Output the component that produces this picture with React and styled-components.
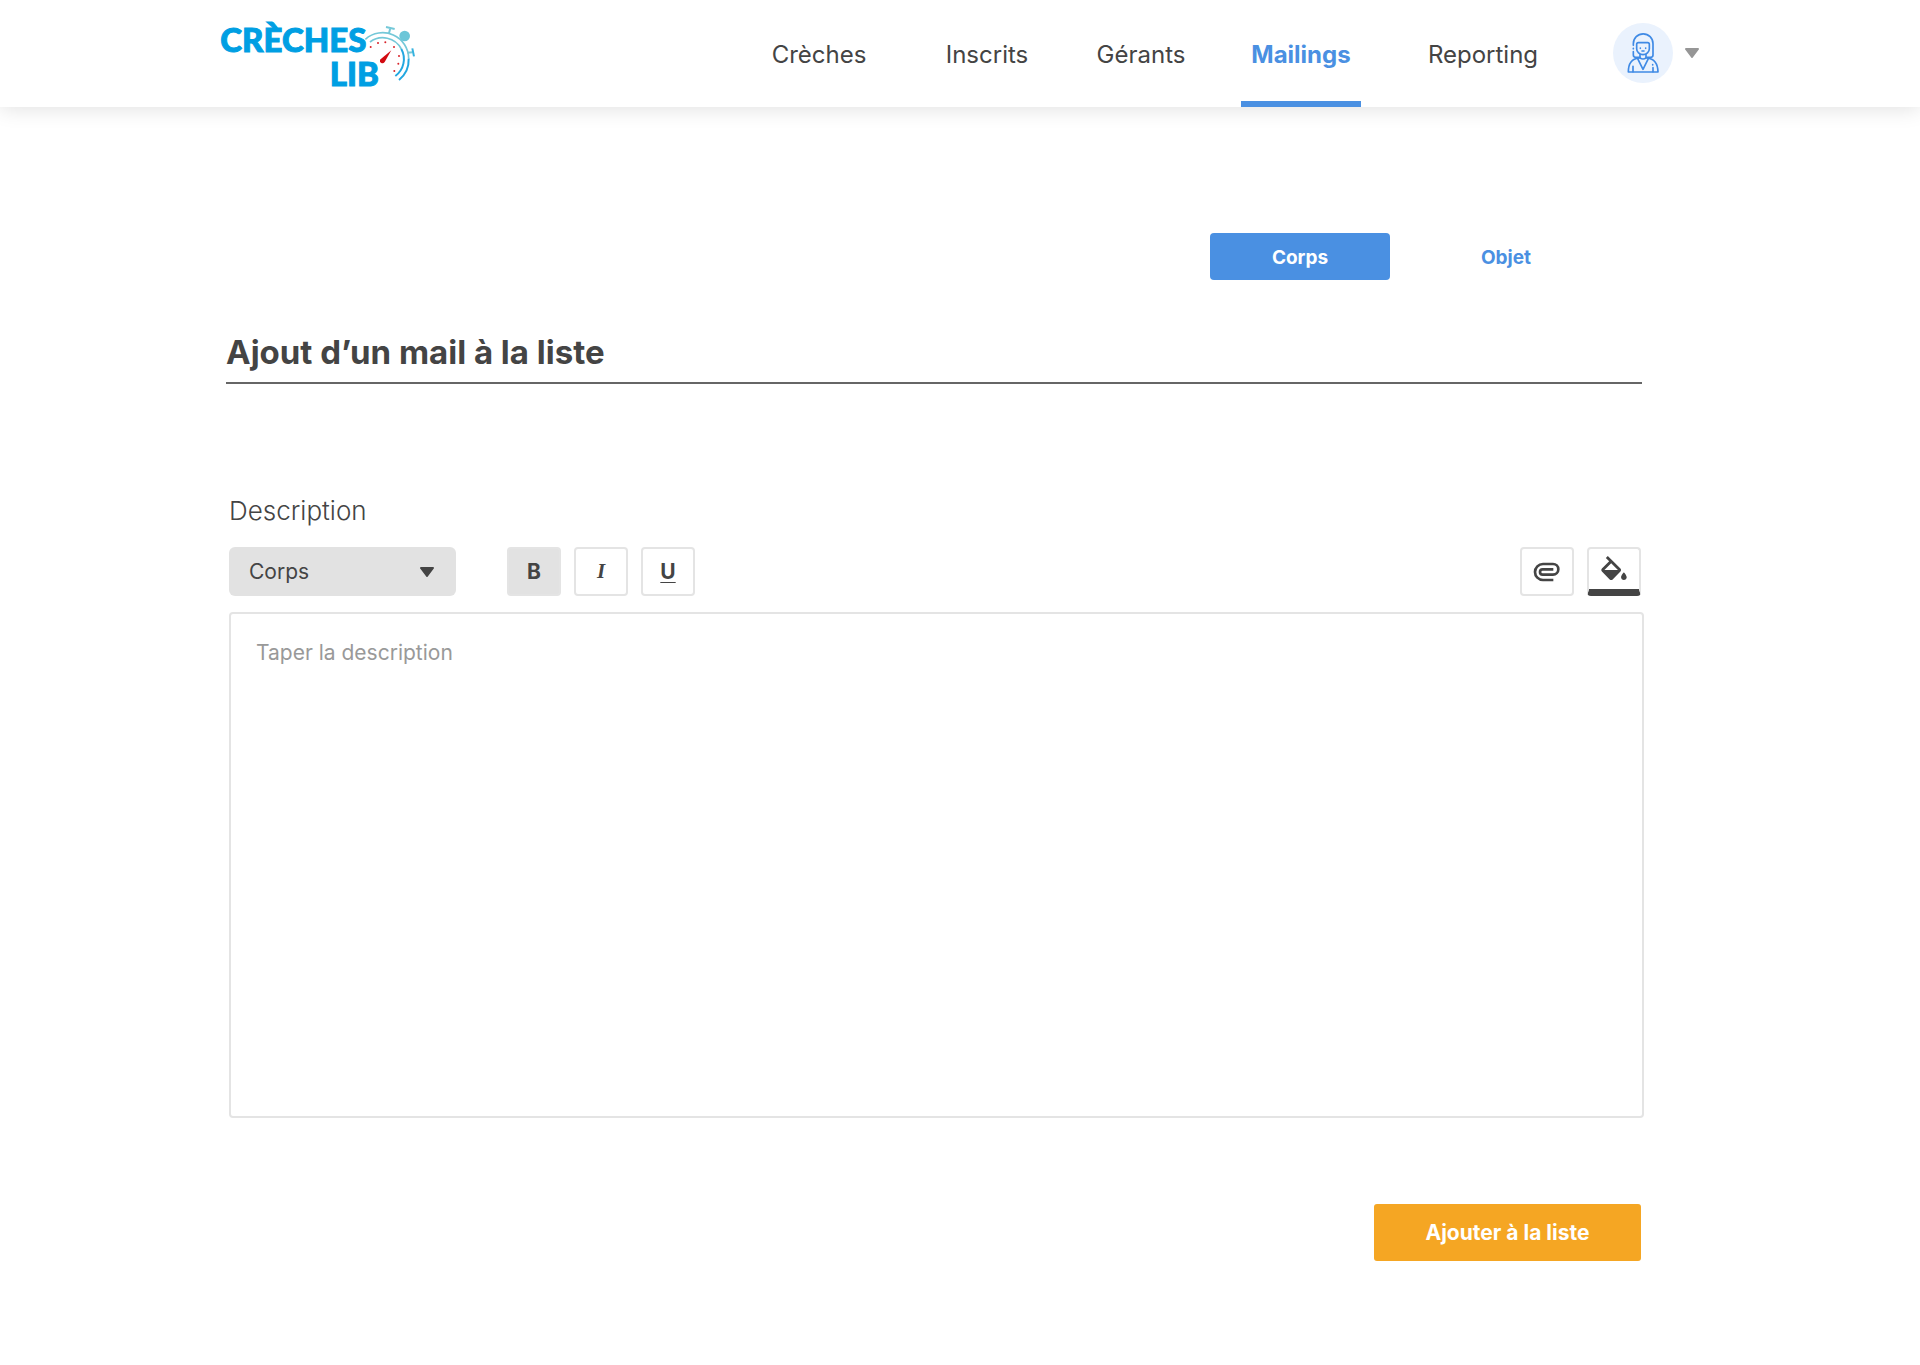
import React, { useState } from 'react';
import styled, { createGlobalStyle, css } from 'styled-components';

const links = [
  { name: 'Crèches', space: 0 },
  { name: 'Inscrits', space: 48 },
  { name: 'Gérants', space: 34 },
  { name: 'Mailings', space: 40 },
  { name: 'Reporting', space: 62 },
];

function Logo() {
  return (
    <svg width="195" height="80" viewBox="30 30 585 240" role="img" aria-label="Crèches Lib">
      <text
        fill="#009fe3"
        stroke="#009fe3"
        strokeWidth="3"
        fontFamily="Lato, sans-serif"
        fontWeight="900"
        fontSize="99"
      >
        <tspan x="31" y="127">CRÈCHES</tspan>
        <tspan x="359" y="228">LIB</tspan>
      </text>
      <g fill="none" stroke="#74c8d8" strokeWidth="5">
        <path d="M466 88A78 78 0 0 1 596 146" />
        <path d="M480 96A63 63 0 0 1 574 117" />
        <path d="M541 54L537 70M528 51L554 57M592 128L608 127" strokeWidth="6" />
        <path d="M607 115L612 139" strokeWidth="6" stroke="#35b2df" />
      </g>
      <g fill="none" stroke="#22a7e0" strokeWidth="6">
        <path d="M596 146A78 78 0 0 1 567 210" />
        <path d="M574 117A63 63 0 0 1 556 198" />
      </g>
      <circle cx="584" cy="78" r="16" fill="#6cc6d8" />
      <g fill="#d8232a">
        <circle cx="482" cy="111" r="3" />
        <circle cx="504" cy="99" r="3" />
        <circle cx="526" cy="97" r="3" />
        <circle cx="552" cy="111" r="3" />
        <circle cx="567" cy="138" r="3" />
        <circle cx="565" cy="161" r="3" />
        <circle cx="553" cy="183" r="3" />
      </g>
      <path d="M544 121L510 149Q508 156 514 159Q520 161 524 156Z" fill="#d20a11" />
    </svg>
  );
}

function Woman() {
  return (
    <svg width="60" height="60" viewBox="0 0 180 180" aria-hidden="true">
      <circle cx="90" cy="90" r="90" fill="#eaf2fd" />
      <g fill="none" stroke="#3f8ae5" strokeWidth="5" strokeLinecap="round" strokeLinejoin="round">
        <path d="M61 67V62A29 29 0 0 1 120 62V96Q120 103 112 103H100" />
        <path d="M61 76V77M61 86V96Q61 103 69 103H81" />
        <path d="M71 64Q71 59 76 59H104Q109 59 109 64V77A19 18 0 0 1 71 77Z" />
        <path d="M81 95V105M99 95V105M81 105Q90 111 99 105" />
        <path d="M78 105Q46 108 46 147H135Q134 108 102 105" />
        <path d="M74 107L90 139L106 107M60 130V146M120 134V146M119 125V126" />
        <path d="M82 75V76M98 75V76M87 84H93" />
      </g>
    </svg>
  );
}

function Caret({ color }) {
  return (
    <svg width="14" height="10" viewBox="0 0 14 10" aria-hidden="true">
      <path d="M1 1H13L7 9Z" fill={color} stroke={color} strokeWidth="2" strokeLinejoin="round" />
    </svg>
  );
}

function Clip() {
  return (
    <svg width="28" height="20" viewBox="103 95 84 60" aria-hidden="true">
      <path
        d="M164 149H133A24 24 0 0 1 133 101H163A16 16 0 0 1 163 133H132A8 8 0 0 1 132 117H164"
        fill="none"
        stroke="#444"
        strokeWidth="8"
      />
    </svg>
  );
}

function Bucket() {
  return (
    <svg width="26" height="24" viewBox="3 0 18 17" aria-hidden="true">
      <path
        d="M16.56 8.94L7.62 0 6.21 1.41l2.38 2.38-5.15 5.15c-.59.59-.59 1.54 0 2.12l5.5 5.5c.29.29.68.44 1.06.44s.77-.15 1.06-.44l5.5-5.5c.59-.58.59-1.53 0-2.12zM5.21 10L10 5.21 14.79 10H5.21zM19 11.5s-2 2.17-2 3.5c0 1.1.9 2 2 2s2-.9 2-2c0-1.33-2-3.5-2-3.5z"
        fill="#444"
      />
    </svg>
  );
}

function App() {
  const [tab, setTab] = useState('Corps');
  const [bold, setBold] = useState(true);
  const [italic, setItalic] = useState(false);
  const [underline, setUnderline] = useState(false);
  const [text, setText] = useState('');

  return (
    <>
      <GlobalStyle />
      <Header>
        <LogoLink href="#"><Logo /></LogoLink>
        <Nav>
          {links.map((link) => (
            <NavLink key={link.name} href="#" $space={link.space} $active={link.name === 'Mailings'}>
              {link.name}
            </NavLink>
          ))}
        </Nav>
        <Account type="button" aria-label="Mon compte">
          <Woman />
          <Caret color="#969696" />
        </Account>
      </Header>
      <Main>
        <Tabs>
          {['Corps', 'Objet'].map((name) => (
            <Tab key={name} type="button" $active={tab === name} onClick={() => setTab(name)}>{name}</Tab>
          ))}
        </Tabs>
        <Title>Ajout d’un mail à la liste</Title>
        <Form onSubmit={(e) => e.preventDefault()}>
          <Label htmlFor="description">Description</Label>
          <Toolbar>
            <SelectBox>
              <Select aria-label="Style du texte" defaultValue="Corps">
                <option>Corps</option>
                <option>Titre</option>
              </Select>
              <Caret color="#444" />
            </SelectBox>
            <Group>
              <Tool type="button" aria-label="Gras" $active={bold} onClick={() => setBold(!bold)}>B</Tool>
              <Tool type="button" aria-label="Italique" $italic $active={italic} onClick={() => setItalic(!italic)}>I</Tool>
              <Tool type="button" aria-label="Souligné" $underline $active={underline} onClick={() => setUnderline(!underline)}>U</Tool>
            </Group>
            <Group $end>
              <Tool type="button" aria-label="Joindre un fichier"><Clip /></Tool>
              <Tool type="button" aria-label="Couleur" $bar><Bucket /></Tool>
            </Group>
          </Toolbar>
          <TextArea
            id="description"
            placeholder="Taper la description"
            value={text}
            onChange={(e) => setText(e.target.value)}
          />
          <Submit type="submit">Ajouter à la liste</Submit>
        </Form>
      </Main>
    </>
  );
}

const GlobalStyle = createGlobalStyle`
  * {
    box-sizing: border-box;
  }
  body {
    margin: 0;
    background: #fff;
    color: #444;
    font-family: Inter, "Open Sans", sans-serif;
  }
  button, select, textarea {
    font-family: inherit;
    color: inherit;
  }
  button {
    cursor: pointer;
  }
`;

const Header = styled.header`
  display: flex;
  align-items: stretch;
  height: 107px;
  padding: 0 220px;
  background: #fff;
  box-shadow: 0 2px 20px rgba(0, 0, 0, 0.12);
`;

const LogoLink = styled.a`
  display: flex;
  align-items: flex-start;
  padding-top: 20px;
`;

const Nav = styled.nav`
  display: flex;
  margin-left: auto;
`;

const NavLink = styled.a`
  display: flex;
  align-items: center;
  justify-content: center;
  width: 120px;
  margin-left: ${(props) => props.$space}px;
  padding-top: 8px;
  border-bottom: 6px solid transparent;
  color: #444;
  font-size: 24px;
  font-weight: 400;
  text-decoration: none;
  ${(props) => props.$active && css`
    border-color: #4a90e2;
    color: #4a90e2;
    font-weight: 700;
  `}
`;

const Account = styled.button`
  display: flex;
  align-items: center;
  gap: 12px;
  margin-left: 70px;
  padding: 0 1px 2px 0;
  border: 0;
  background: none;
`;

const Main = styled.main`
  padding: 126px 276px 104px 226px;
`;

const Tabs = styled.div`
  display: flex;
  justify-content: flex-end;
  gap: 26px;
  padding-right: 48px;
`;

const Tab = styled.button`
  width: 180px;
  height: 47px;
  padding-top: 2px;
  border: 0;
  border-radius: 4px;
  background: ${(props) => (props.$active ? '#4a90e2' : 'transparent')};
  color: ${(props) => (props.$active ? '#fff' : '#4a90e2')};
  font-size: 19px;
  font-weight: 700;
`;

const Title = styled.h1`
  margin: 52px 2px 0 0;
  padding-bottom: 10px;
  border-bottom: 2px solid #666;
  font-size: 33px;
  line-height: 40px;
  font-weight: 700;
`;

const Form = styled.form`
  display: flex;
  flex-direction: column;
  margin-top: 107px;
  padding-left: 3px;
`;

const Label = styled.label`
  font-size: 26px;
  line-height: 40px;
  font-weight: 300;
`;

const Toolbar = styled.div`
  display: flex;
  margin: 16px 3px 16px 0;
`;

const SelectBox = styled.div`
  display: grid;
  align-items: center;
  width: 227px;
  margin-right: 51px;
  border-radius: 6px;
  background: #e2e2e2;
  > * {
    grid-area: 1 / 1;
  }
  svg {
    justify-self: end;
    margin-right: 22px;
    pointer-events: none;
  }
`;

const Select = styled.select`
  width: 100%;
  height: 49px;
  padding: 0 20px;
  border: 0;
  background: none;
  appearance: none;
  font-size: 21px;
  font-weight: 400;
`;

const Group = styled.div`
  display: flex;
  gap: 13px;
  margin-left: ${(props) => (props.$end ? 'auto' : '0')};
`;

const Tool = styled.button`
  display: flex;
  align-items: center;
  justify-content: center;
  width: 54px;
  height: 49px;
  padding: 0;
  border: 2px solid #e4e4e4;
  border-radius: 4px;
  background: ${(props) => (props.$active ? '#e2e2e2' : '#fff')};
  font-size: 21px;
  font-weight: 700;
  ${(props) => props.$italic && css`
    font-family: "Liberation Serif", serif;
    font-style: italic;
  `}
  ${(props) => props.$underline && css`
    text-decoration: underline 1px;
    text-underline-offset: 3px;
  `}
  ${(props) => props.$bar && css`
    padding-bottom: 3px;
    border-bottom: 7px solid #444;
  `}
`;

const TextArea = styled.textarea`
  width: 100%;
  height: 506px;
  padding: 26px 25px;
  border: 2px solid #e4e4e4;
  border-radius: 4px;
  outline: 0;
  resize: none;
  font-size: 21px;
  line-height: 26px;
  font-weight: 400;
  &::placeholder {
    color: #999;
    opacity: 1;
  }
`;

const Submit = styled.button`
  align-self: flex-end;
  width: 267px;
  height: 57px;
  margin: 86px 3px 0 0;
  border: 0;
  border-radius: 3px;
  background: #f5a623;
  color: #fff;
  font-size: 21px;
  font-weight: 700;
`;

export default App;
